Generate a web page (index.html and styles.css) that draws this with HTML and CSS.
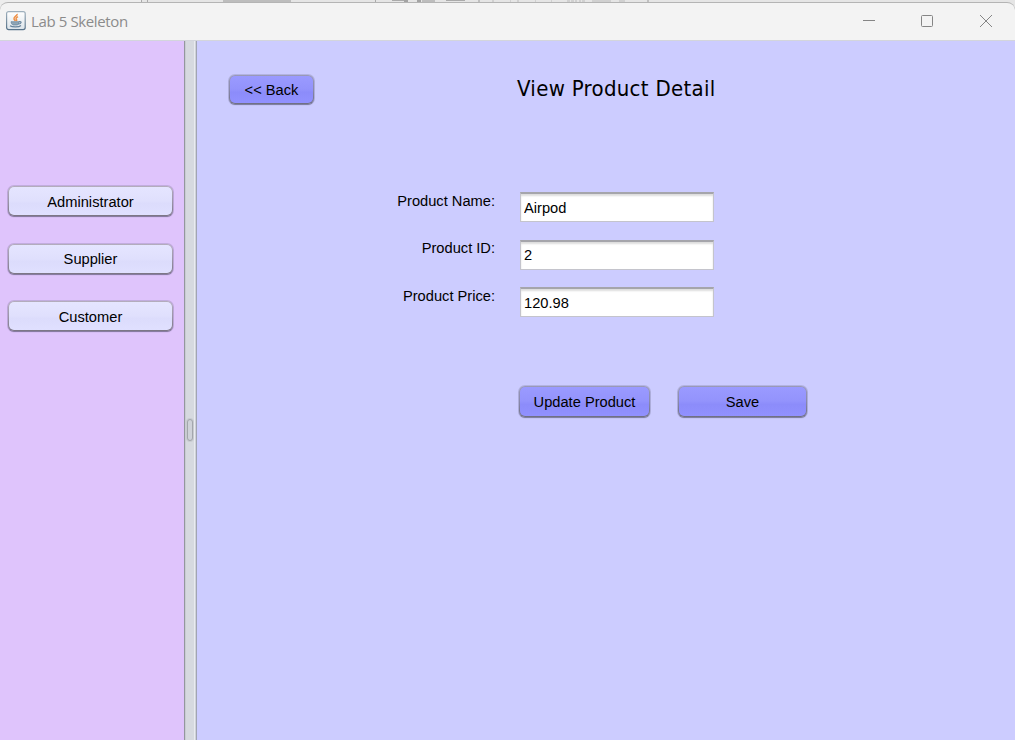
FILE: index.html
```html
<!DOCTYPE html>
<html lang="en">
<head>
<meta charset="utf-8">
<title>Lab 5 Skeleton</title>
<link rel="stylesheet" href="styles.css">
</head>
<body>
<svg class="backdrop" width="1015" height="8" aria-hidden="true">
  <rect width="142" height="8" fill="#ededed"/>
  <path d="M141.5 0V3M147.5 0V3M375.5 0V3" stroke="#aaa"/>
  <path d="M223 0h68v3h-68zM422 0h13v3h-13z" fill="#bdbdbd"/>
  <path d="M392 .5h16M446 .5h19" stroke="#aaa"/>
  <path d="M404 0h4v2h-4zM417 0h4v3h-4z" fill="#a3a3a3"/>
  <path d="M478 0h2v3h-2zM647 0h2v3h-2z" fill="#c0c0c0"/>
  <path d="M492 0h2v3h-2zM510 0h1v3h-1zM517 0h2v3h-2zM535 0h1v3h-1zM551 0h1v3h-1zM567 0h3v3h-3zM571 0h3v3h-3zM575 0h2v3h-2zM579 0h2v3h-2zM582 0h3v3h-3zM592 0h19v3h-19zM619 0h6v3h-6z" fill="#d0d0d0"/>
</svg>
<div class="window">
  <header class="titlebar">
    <svg class="app-icon" width="20" height="20" viewBox="0 0 20 20">
      <defs><linearGradient id="tile" x2="0" y2="1"><stop stop-color="#fff"/><stop offset="1" stop-color="#dce4ea"/></linearGradient>
      <linearGradient id="edge" x2="0" y2="1"><stop stop-color="#9fb0bd"/><stop offset="1" stop-color="#58738a"/></linearGradient></defs>
      <rect x=".6" y=".6" width="18.6" height="18" rx="2" fill="url(#tile)" stroke="url(#edge)" stroke-width="1.2"/>
      <path d="M11.2 2.800c.4 2-3.600 2.800-3.200 5 .1.900 1 1.400 1.200 2.200M12 5.600c-2.200 1.300-2.400 2.100-1.500 3 .5.600.2 1-.2 1.500" fill="none" stroke="#ee9148" stroke-width="1.500"/>
      <path d="M5 10.700h8c-.2 1.900-.9 3-1.800 3.300H7c-1.100-.5-1.700-1.500-2-3.300z" fill="#8fa6b6" stroke="#66839b" stroke-width=".7"/>
      <path d="M13 10.800c3-.7 2.700 2-.8 2.300M4 14.700c2.500 1.700 8.800 1.600 11-.2" fill="none" stroke="#66839b" stroke-width="1.200"/>
    </svg>
    <span class="app-name">Lab 5 Skeleton</span>
    <svg class="controls" width="140" height="20" viewBox="0 0 140 20" fill="none" stroke="#858585">
      <path d="M3 9.500h12"/>
      <rect x="61.500" y="4.500" width="11" height="11" rx="1"/>
      <path d="M120 4l12 12M132 4l-12 12"/>
    </svg>
  </header>
  <div class="split">
    <nav class="sidebar">
      <button class="btn light">Administrator</button>
      <button class="btn light">Supplier</button>
      <button class="btn light">Customer</button>
    </nav>
    <div class="divider"><i class="grip"></i></div>
    <main class="content">
      <div class="heading">
        <button class="btn back">&lt;&lt; Back</button>
        <h1 class="title">View Product Detail</h1>
      </div>
      <form class="form">
        <label class="label" for="name">Product Name:</label>
        <input class="field" id="name" value="Airpod">
        <label class="label" for="pid">Product ID:</label>
        <input class="field" id="pid" value="2">
        <label class="label" for="price">Product Price:</label>
        <input class="field" id="price" value="120.98">
      </form>
      <div class="actions">
        <button class="btn update">Update Product</button>
        <button class="btn save">Save</button>
      </div>
    </main>
  </div>
</div>
</body>
</html>
```
FILE: styles.css
```css
* { box-sizing: border-box; }
body {
  margin: 0;
  height: 740px;
  overflow: hidden;
  padding-top: 2px;
  background: #e5e5e5;
  font: 14.67px/17px "Liberation Sans", Arial, sans-serif;
  color: #000;
}
.backdrop { position: absolute; top: 0; left: 0; }
.window {
  position: relative;
  height: 738px;
  display: flex;
  flex-direction: column;
  overflow: hidden;
  border-top: 1px solid #b4b4b4;
  border-radius: 8px 8px 0 0;
  background: #f3f3f3;
}
.titlebar {
  height: 38px;
  flex: none;
  display: flex;
  align-items: center;
  padding: 0 14px 2px 6px;
  border-bottom: 1px solid #d3d5dc;
}
.app-icon { margin-top: 1px; }
.app-name {
  margin-left: 5px;
  font: 15px/20px "Open Sans", "Noto Sans", sans-serif;
  letter-spacing: -0.38px;
  color: #8b8b8b;
}
.controls { margin-left: auto; margin-right: 1px; }
.split { flex: 1; display: flex; }
.sidebar {
  width: 184px;
  padding: 145px 11px 0 8px;
  display: flex;
  flex-direction: column;
  gap: 27.500px;
  background: #dfc4fc;
}
.btn {
  height: 30px;
  padding: 2px 0 0;
  border: 1px solid transparent;
  border-radius: 6px;
  box-shadow: 0 0 0 1px rgba(90, 90, 120, .22), 0 1px 1px rgba(60, 60, 80, .5);
  font: inherit;
  color: #000;
  background:
    linear-gradient(#9a9aff, #9393fc 48%, #8c8cfa 60%, #9191ff) padding-box,
    linear-gradient(#9a9ab8, #8989ac 50%, #707083) border-box;
}
.light {
  background:
    linear-gradient(#e5e5ff, #e0e0fd 48%, #dcdcfc 60%, #e0e0ff) padding-box,
    linear-gradient(#b4adbd, #9d96aa 50%, #7c7685) border-box;
}
.divider {
  width: 13px;
  display: flex;
  align-items: center;
  justify-content: center;
  padding: 79px 1px 0 0;
  border-left: 1px solid #93979d;
  border-right: 1px solid #a1a4b2;
  background: linear-gradient(90deg, #c9ccd2 0 1px, #d6d9df 1px 9px, #e9ebef 9px 10px, #cfd2d8 10px);
}
.grip {
  width: 6px;
  height: 22px;
  border: 1px solid #a3a6ac;
  border-radius: 3px;
  box-shadow: 0 0 0 1px #c8cbd1;
  background: #cfd2d9;
}
.content { flex: 1; background: #ccccff; }
.heading { display: flex; height: 64px; padding: 34px 0 0 32px; }
.back { width: 85px; height: 29px; }
.title {
  margin: 0 0 0 203px;
  font: 22px/28px "DejaVu Sans Condensed", "DejaVu Sans", sans-serif;
  letter-spacing: 0.3px;
  white-space: nowrap;
}
.form {
  display: grid;
  grid-template-columns: 298px 194px;
  grid-auto-rows: 30px;
  gap: 17.500px 25px;
  margin-top: 87px;
}
.label { text-align: right; padding-top: 0.5px; }
.field {
  width: 194px;
  height: 30px;
  padding: 0 3px;
  border: 1px solid #c4c4cc;
  border-top: 2px solid #a5a5ab;
  outline: none;
  box-shadow: inset 0 2px 2px #ddd;
  background: #fff;
  color: #000;
  font: inherit;
}
.actions { display: flex; gap: 28px; margin: 69px 0 0 322px; }
.actions .btn { height: 31px; }
.update { width: 131px; }
.save { width: 129px; }
```
